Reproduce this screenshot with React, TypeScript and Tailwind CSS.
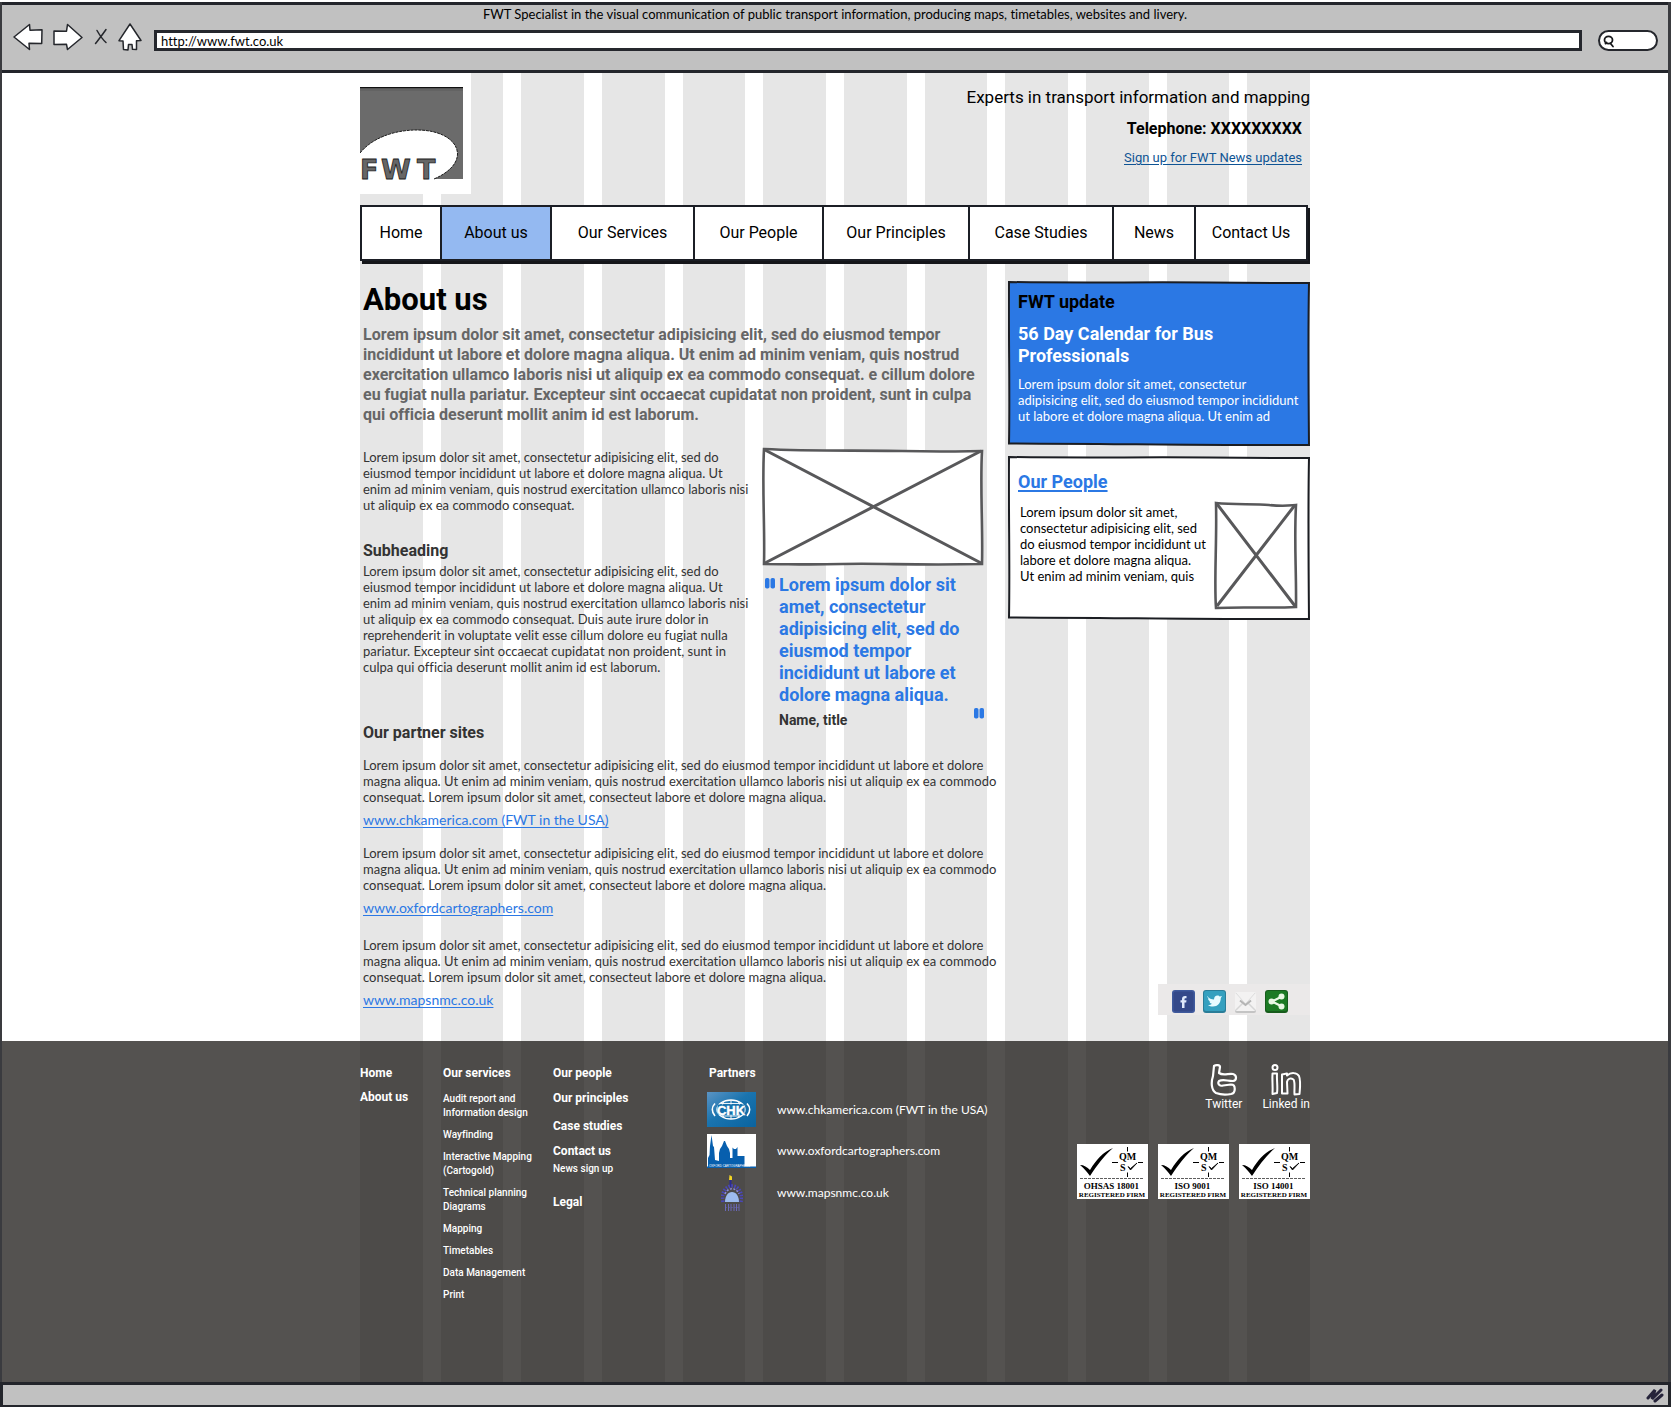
import React, { Fragment } from "react";

const introLines = [
  "Lorem ipsum dolor sit amet, consectetur adipisicing elit, sed do eiusmod tempor",
  "incididunt ut labore et dolore magna aliqua. Ut enim ad minim veniam, quis nostrud",
  "exercitation ullamco laboris nisi ut aliquip ex ea commodo consequat. e cillum dolore",
  "eu fugiat nulla pariatur. Excepteur sint occaecat cupidatat non proident, sunt in culpa",
  "qui officia deserunt mollit anim id est laborum.",
];

const leadLines = [
  "Lorem ipsum dolor sit amet, consectetur adipisicing elit, sed do",
  "eiusmod tempor incididunt ut labore et dolore magna aliqua. Ut",
  "enim ad minim veniam, quis nostrud exercitation ullamco laboris nisi",
  "ut aliquip ex ea commodo consequat.",
];

const subLines = [
  ...leadLines.slice(0, 3),
  "ut aliquip ex ea commodo consequat. Duis aute irure dolor in",
  "reprehenderit in voluptate velit esse cillum dolore eu fugiat nulla",
  "pariatur. Excepteur sint occaecat cupidatat non proident, sunt in",
  "culpa qui officia deserunt mollit anim id est laborum.",
];

const partnerLines = [
  "Lorem ipsum dolor sit amet, consectetur adipisicing elit, sed do eiusmod tempor incididunt ut labore et dolore",
  "magna aliqua. Ut enim ad minim veniam, quis nostrud exercitation ullamco laboris nisi ut aliquip ex ea commodo",
  "consequat. Lorem ipsum dolor sit amet, consecteut labore et dolore magna aliqua.",
];

const quoteLines = [
  "Lorem ipsum dolor sit",
  "amet, consectetur",
  "adipisicing elit, sed do",
  "eiusmod tempor",
  "incididunt ut labore et",
  "dolore magna aliqua.",
];

const updateLines = [
  "Lorem ipsum dolor sit amet, consectetur",
  "adipisicing elit, sed do eiusmod tempor incididunt",
  "ut labore et dolore magna aliqua. Ut enim ad",
];

const peopleLines = [
  "Lorem ipsum dolor sit amet,",
  "consectetur adipisicing elit, sed",
  "do eiusmod tempor incididunt ut",
  "labore et dolore magna aliqua.",
  "Ut enim ad minim veniam, quis",
];

const navItems = [
  "Home",
  "About us",
  "Our Services",
  "Our People",
  "Our Principles",
  "Case Studies",
  "News",
  "Contact Us",
];

function Lines({ of }: { of: string[] }) {
  return (
    <>
      {of.map((line, i) => (
        <Fragment key={i}>
          {i > 0 && <br />}
          {line}
        </Fragment>
      ))}
    </>
  );
}

function Toolbar() {
  const iconProps = {
    fill: "#fff",
    stroke: "#25272c",
    strokeWidth: 1.5,
    strokeLinejoin: "round" as const,
    strokeLinecap: "round" as const,
  };
  return (
    <header className="flex h-[71px] flex-col border-t-[3px] border-b-[3px] border-[#23252b] bg-[#c1c1c1]">
      <p className="text-center font-['Lato',sans-serif] text-[13px] leading-[18px] whitespace-nowrap text-black">
        FWT Specialist in the visual communication of public transport information, producing maps, timetables,
        websites and livery.
      </p>
      <div className="flex items-start pr-2.5 pl-[11px]">
        <button type="button" aria-label="Back" className="mr-2.5">
          <svg width="30" height="28" viewBox="0 0 30 28" {...iconProps}>
            <path d="M1 14 16.500 1.500 17 7.300 29 6.700 28.700 20.500 16 20.300 16.500 26.500Z" />
          </svg>
        </button>
        <button type="button" aria-label="Forward" className="mr-[11px]">
          <svg width="30" height="28" viewBox="0 0 30 28" {...iconProps}>
            <path d="M1 8 13.500 8.200 14.500 1.500 29 14.500 14.500 26.500 13.500 21.300 1 21.500Z" />
          </svg>
        </button>
        <button type="button" aria-label="Stop" className="mr-2.5">
          <svg width="14" height="28" viewBox="0 0 14 28" {...iconProps} fill="none">
            <path d="M3 7.500C5 11 8 16 12 19.500M12 6.500C9 11 5 16 1.500 20.500" />
          </svg>
        </button>
        <button type="button" aria-label="Home page" className="mr-3">
          <svg width="24" height="28" viewBox="0 0 24 28" {...iconProps}>
            <path d="M12 1 23 17.500 18.500 17.800 18.500 26.500 14.500 26.300 14 21.500 10.500 21.500 10 27 5.500 26.500 5 18 1 17.700Z" />
          </svg>
        </button>
        <input
          type="text"
          aria-label="Address"
          defaultValue="http://www.fwt.co.uk"
          className="mt-[7px] h-[21px] min-w-0 flex-1 border-[3px] border-[#25272d] bg-white px-1 font-['Lato',sans-serif] text-[13px] text-black outline-none"
        />
        <label className="mt-[7px] ml-4 flex h-[21px] w-[60px] items-center rounded-full border-2 border-[#25272d] bg-white pl-0.5">
          <svg width="14" height="14" viewBox="0 0 14 14" fill="none" stroke="#17181b" strokeWidth="1.8">
            <ellipse cx="6.500" cy="6" rx="4" ry="3.700" />
            <path d="M3.500 9.500 4.500 8.500M8.500 9.500 11 12.500" strokeLinecap="round" />
          </svg>
          <input type="text" aria-label="Search" className="w-8 min-w-0 bg-transparent text-xs outline-none" />
        </label>
      </div>
    </header>
  );
}

function Stripes() {
  return (
    <div aria-hidden="true" className="absolute inset-0 flex justify-center">
      <div className="grid w-full max-w-[950px] grid-cols-12 gap-x-[18px]">
        {Array.from({ length: 12 }, (_, i) => (
          <div key={i} className="bg-[#e6e6e6]" />
        ))}
      </div>
    </div>
  );
}

function FwtLogo() {
  return (
    <svg width="103" height="100" viewBox="0 0 103 100" role="img" aria-label="FWT">
      <rect width="103" height="92" fill="#6b6b6b" />
      <path d="M0 .5H103" stroke="#111" strokeWidth="1.500" />
      <path d="M0 3H103" stroke="#5c5c5c" />
      <path d="M0 66C12 51 34 43 57 43C82 43 97.500 54 97.500 67C97.500 77 88 86 74 92H0Z" fill="#fff" />
      <path
        d="M0 66C12 51 34 43 57 43C82 43 97.500 54 97.500 67C97.500 77 88 86 74 92"
        fill="none"
        stroke="#1a1a1a"
        strokeDasharray="3 .8"
      />
      <g
        fill="#666"
        stroke="#1a1a1a"
        strokeWidth=".8"
        fontSize="27"
        fontFamily="'DejaVu Sans', sans-serif"
        fontWeight="700"
      >
        <text x="0" y="91.500">F</text>
        <text x="21" y="91.500">W</text>
        <text x="57" y="91.500">T</text>
      </g>
    </svg>
  );
}

function SketchFrame({ fill }: { fill: string }) {
  return (
    <svg
      aria-hidden="true"
      className="absolute inset-0 h-full w-full"
      viewBox="0 0 300 164"
      preserveAspectRatio="none"
    >
      <path
        d="M1 1C60 2 140 1 200 1.500S270 2 299 2C298 50 298.500 110 299 163C220 163.500 150 162.500 90 162S40 162 1 161.500C2 110 .5 60 1 1Z"
        fill={fill}
        stroke="#1b1d22"
        strokeWidth="2"
        vectorEffect="non-scaling-stroke"
      />
    </svg>
  );
}

function WidePicture() {
  return (
    <svg className="w-full" viewBox="0 0 222 119" role="img" aria-label="Picture">
      <path
        d="M2 2C50 4.500 100 3 140 4S190 4.500 220 4C218 40 221 80 220 117C150 118.500 120 116 80 117S30 117 2 117C3 80 0 40 2 2Z"
        fill="#fff"
        stroke="#58585a"
        strokeWidth="2.600"
      />
      <path d="M3 3 219 116M3 116 219 4" stroke="#58585a" strokeWidth="3" />
    </svg>
  );
}

function TallPicture() {
  return (
    <svg width="84" height="109" viewBox="0 0 84 109" role="img" aria-label="Portrait">
      <path
        d="M2 2C20 4 40 2.500 55 4S75 4.500 82 4C80 40 82.500 70 82 106C55 107.500 30 105.500 2 107C0 80 3 40 2 2Z"
        fill="#fff"
        stroke="#58585a"
        strokeWidth="2.600"
      />
      <path d="M3 3 81 105M3 105 81 4" stroke="#58585a" strokeWidth="3" />
    </svg>
  );
}

function QuoteMark() {
  return (
    <svg width="10" height="11" viewBox="0 0 10 11" aria-hidden="true" fill="#2b78e4">
      <rect x="0" y="0" width="4.500" height="10.500" rx="1.800" />
      <rect x="5.500" y="0" width="4.500" height="10.500" rx="1.800" />
    </svg>
  );
}

function ShareStrip() {
  return (
    <div className="mb-[26px] flex h-[31px] w-[152px] items-end gap-2 self-end bg-[#ebe9e9] pb-0.5 pl-3.5">
      <a href="#facebook" aria-label="Facebook">
        <svg width="23" height="23" viewBox="0 0 23 23">
          <rect width="23" height="23" rx="3" fill="#3f5a9d" />
          <rect x="1.500" y="1.500" width="20" height="20" rx="2" fill="#34498a" />
          <path d="M10 18V12.500H8.500V10.300H10V9C10 7 11 6 13 6H14.500V8.300H13.300C12.700 8.300 12.500 8.600 12.500 9.200V10.300H14.500L14.200 12.500H12.500V18Z" fill="#dfe9fb" />
        </svg>
      </a>
      <a href="#twitter" aria-label="Twitter">
        <svg width="23" height="23" viewBox="0 0 23 23">
          <rect width="23" height="23" rx="3" fill="#2a7d98" />
          <rect x="1" y="1" width="21" height="20" rx="2" fill="#35a0bf" />
          <path d="M4 6C6 8.500 8.500 9.500 11 9.500C11 7 12.500 5.500 14.500 5.500C15.500 5.500 16.300 6 16.800 6.600L19 6L17.800 8C17.800 13 14.500 16.500 10 16.500C8 16.500 6.300 16 5 15C7 15 8 14.600 9 13.800C7.500 13.500 6.700 12.700 6.300 11.500H7.500C6 11 5 9.700 5 8.300L6 8.500C4.700 7.600 4 7 4 6Z" fill="#e8fbff" />
        </svg>
      </a>
      <a href="#mail" aria-label="E-mail">
        <svg width="23" height="23" viewBox="0 0 23 23">
          <rect x="1" y="3" width="21" height="20" rx="2" fill="#c4c4c4" />
          <rect x="1" y="2" width="21" height="19" rx="2" fill="#f3f2f2" />
          <path d="M2 20 8.500 13.500M21 20 14.500 13.500" stroke="#d6d6d6" strokeWidth="1.500" />
          <path d="M2 3 11.500 14 21 3" fill="none" stroke="#dcdcdc" />
          <path d="M6 10.500 11.500 15 17 10.500" fill="none" stroke="#b4b4b4" strokeWidth="2" />
        </svg>
      </a>
      <a href="#share" aria-label="Share">
        <svg width="23" height="23" viewBox="0 0 23 23">
          <rect width="23" height="23" rx="3" fill="#175c1c" />
          <rect x="1" y="1" width="21" height="20" rx="2" fill="#1c7a24" />
          <path d="M17 6.500 7 11.500 17 16.500" fill="none" stroke="#e9f8e4" strokeWidth="2.400" />
          <g fill="#e9f8e4">
            <circle cx="16.500" cy="6.500" r="3" />
            <circle cx="6.500" cy="11.500" r="3" />
            <circle cx="16.500" cy="16.500" r="3" />
          </g>
        </svg>
      </a>
    </div>
  );
}

function PartnerBlock({ link }: { link: string }) {
  return (
    <div className="flex flex-col items-start font-['Lato',sans-serif]">
      <p className="text-[13px] leading-4 whitespace-nowrap text-[#333]">
        <Lines of={partnerLines} />
      </p>
      <a href="#partner" className="mt-1.5 text-[14px] leading-[18px] text-[#2b78e4] underline underline-offset-2">
        {link}
      </a>
    </div>
  );
}

function ChkLogo() {
  return (
    <svg width="49" height="35" viewBox="0 0 49 35" role="img" aria-label="CHK">
      <defs>
        <linearGradient id="chk" x1="0" y1="0" x2="1" y2="1">
          <stop offset="0" stopColor="#5b94c4" />
          <stop offset=".45" stopColor="#1a74af" />
          <stop offset="1" stopColor="#0a639f" />
        </linearGradient>
      </defs>
      <rect width="49" height="35" fill="url(#chk)" />
      <g fill="none" stroke="#fff">
        <ellipse cx="24" cy="17.500" rx="14" ry="9.500" strokeWidth="1.300" />
        <path d="M24 8V27M17 9C14 15 14 20 17 26M31 9C34 15 34 20 31 26M14 11.500H34M14 24H34" strokeWidth=".9" />
        <path d="M8 11.500C4.500 15 4.500 20 8 24M40 11.500C43.500 15 43.500 20 40 24" strokeWidth="1.700" />
      </g>
      <rect x="10.500" y="12.500" width="27" height="10" fill="#1670ab" />
      <text x="24" y="22.500" textAnchor="middle" fill="#fff" stroke="#fff" strokeWidth=".4" fontSize="13" fontWeight="700" fontFamily="'Liberation Sans', sans-serif">
        CHK
      </text>
    </svg>
  );
}

function OxfordLogo() {
  return (
    <svg width="49" height="34" viewBox="0 0 49 34" role="img" aria-label="Oxford skyline">
      <rect width="49" height="34" fill="#fff" />
      <path
        d="M1 33V24L2.500 21 3 12 4.500 1 6 12 7 13 8 26 12 27V19L13 15 15 12 17 7 18 7 20 12 22 15 23 19V24H25.500V13.500L27 15H29L30.500 13V22H37.500V33Z"
        fill="#075fae"
      />
      <path d="M0 33.300H49" stroke="#075fae" strokeWidth="1.500" />
      <text x="2" y="32.500" fill="#fff" fontSize="3" fontFamily="'Liberation Sans', sans-serif">
        OXFORD CARTOGRAPHERS
      </text>
    </svg>
  );
}

function MapsLogo() {
  return (
    <svg width="22" height="36" viewBox="0 0 22 36" role="img" aria-label="Maps NMC">
      <path d="M8.500 0 11 1.500V5H8Z" fill="#f3d524" />
      <path d="M9.500 5V12" stroke="#2b2a93" strokeWidth="2" />
      <path d="M2 27C0 17 5 11 11 11S22 17 20 27" fill="none" stroke="#4a47b8" strokeWidth="3.500" strokeDasharray="1.500 1.400" />
      <path d="M4 19C7 12 15 12 18 19" fill="none" stroke="#8f8cdb" strokeWidth="1.500" strokeDasharray="2 1.500" />
      <path d="M4 27C4 21 7 17 11 17S18 21 18 27Z" fill="#9dbbee" />
      <path d="M4.500 29V36M7.500 29V36M10 29V36M13 29V36M15.500 29V36M18 29V36" stroke="#6b68b8" />
      <path d="M4.500 32.500H18" stroke="#6b68b8" strokeDasharray="1 2" />
    </svg>
  );
}

function Badge({ name }: { name: string }) {
  return (
    <svg width="71" height="55" viewBox="0 0 71 55" role="img" aria-label={name}>
      <rect width="71" height="55" fill="#fff" />
      <path d="M3 21C7 21 10 23 13 26C19 16 26 8 36 4C28 11 20 21 13 32C10 28 7 24 3 21Z" fill="#000" />
      <g fontFamily="'Liberation Serif', serif" fontWeight="700" fill="#000">
        <text x="42" y="16" fontSize="10">QM</text>
        <text x="43" y="27" fontSize="10">S</text>
        <text x="34.500" y="45" fontSize="9" textAnchor="middle">{name}</text>
        <text x="35" y="52.500" fontSize="7" textAnchor="middle">REGISTERED FIRM</text>
      </g>
      <path d="M51 22.500 53.500 26 60 19 53.500 24.500Z" fill="#000" stroke="#000" strokeWidth=".8" />
      <path d="M50.500 3V7.500M50.500 28.500V33M35 18.500H41M61 18.500H66" stroke="#000" />
      <path d="M3 34.500H67" stroke="#333" strokeWidth=".8" strokeDasharray="3 1" />
    </svg>
  );
}

function SocialLinks() {
  return (
    <div className="-mt-px flex justify-end gap-5 text-[12px] leading-4">
      <a href="#twitter" className="flex flex-col items-center">
        <svg width="28" height="32" viewBox="0 0 28 32" fill="none" stroke="#fff" strokeWidth="2.200" strokeLinejoin="round" aria-hidden="true">
          <path d="M4 2C6 .5 10 1 10 3L9 9C13 12 19 9 23 10C27 11 27 16.500 23 17C17 17 13 15 9 17C7 20 10 22.500 13 21.500L21 20.500C26 20.500 26 29 21 30C15 31 10 30.500 6 29C1 26 1 18 3 12Z" />
        </svg>
        Twitter
      </a>
      <a href="#linkedin" className="flex flex-col items-center">
        <svg width="32" height="32" viewBox="0 0 32 32" fill="none" stroke="#fff" strokeWidth="2" strokeLinejoin="round" aria-hidden="true">
          <circle cx="5" cy="3.500" r="2.500" />
          <path d="M2.500 9.500 7 9.500C6.500 16 8 23 7 29L2.500 30C3 22 2 16 2.500 9.500Z" />
          <path d="M12 10.500 17 9.500V11.500C21 8 27 8.500 29 12C31 17 30 24 29.500 30L24.500 30.500C24 25 25.500 19 23.500 15.500C20 13.500 17.500 15 17 18L17.500 29.500L12 29.500Z" />
        </svg>
        Linked in
      </a>
    </div>
  );
}

function Footer() {
  return (
    <footer className="relative flex-1 bg-[#0b0905]/70 pt-6 pb-20 text-white">
      <div className="mx-auto grid max-w-[950px] grid-cols-[83fr_110fr_154fr_603fr]">
        <ul className="flex flex-col gap-2 text-[12px] leading-4 font-bold whitespace-nowrap">
          <li><a href="#home">Home</a></li>
          <li><a href="#about">About us</a></li>
        </ul>
        <div className="whitespace-nowrap">
          <a href="#services" className="block text-[12px] leading-4 font-bold">Our services</a>
          <ul className="mt-[11px] flex flex-col gap-2 text-[10px] leading-[14px] font-medium">
            <li><a href="#audit">Audit report and<br />Information design</a></li>
            <li><a href="#way">Wayfinding</a></li>
            <li><a href="#interactive">Interactive Mapping<br />(Cartogold)</a></li>
            <li><a href="#technical">Technical planning<br />Diagrams</a></li>
            <li><a href="#mapping">Mapping</a></li>
            <li><a href="#timetables">Timetables</a></li>
            <li><a href="#data">Data Management</a></li>
            <li><a href="#print">Print</a></li>
          </ul>
        </div>
        <ul className="flex flex-col text-[12px] leading-4 font-bold whitespace-nowrap">
          <li><a href="#people">Our people</a></li>
          <li className="mt-[9px]"><a href="#principles">Our principles</a></li>
          <li className="mt-3"><a href="#cases">Case studies</a></li>
          <li className="mt-[9px]"><a href="#contact">Contact us</a></li>
          <li className="mt-0.5 text-[10px] font-medium"><a href="#news">News sign up</a></li>
          <li className="mt-[17px]"><a href="#legal">Legal</a></li>
        </ul>
        <div className="flex justify-between">
          <div>
            <h2 className="pl-0.5 text-[12px] leading-4 font-bold">Partners</h2>
            <ul className="mt-[11px] grid gap-[7px] font-['Lato',sans-serif] text-[12px] whitespace-nowrap">
              <li><a href="#chk" className="flex items-center gap-[21px]"><ChkLogo />www.chkamerica.com (FWT in the USA)</a></li>
              <li><a href="#oxford" className="flex items-center gap-[21px]"><OxfordLogo />www.oxfordcartographers.com</a></li>
              <li>
                <a href="#maps" className="flex items-center gap-[21px]">
                  <span className="flex w-[49px] justify-center"><MapsLogo /></span>
                  www.mapsnmc.co.uk
                </a>
              </li>
            </ul>
          </div>
          <div className="flex flex-col gap-8">
            <SocialLinks />
            <div className="flex gap-2.5">
              <Badge name="OHSAS 18001" />
              <Badge name="ISO 9001" />
              <Badge name="ISO 14001" />
            </div>
          </div>
        </div>
      </div>
    </footer>
  );
}

export default function App() {
  return (
    <div className="flex min-h-screen flex-col bg-white pt-0.5 font-['Roboto','Liberation_Sans',sans-serif] [font-variant-ligatures:none]">
      <div className="flex flex-1 flex-col border-r-[3px] border-l-2 border-[#3a3b3f]">
        <Toolbar />
        <div className="relative flex flex-1 flex-col">
          <Stripes />
          <div className="relative mx-auto flex w-full max-w-[950px] flex-col">
            <div className="flex h-[132px] justify-between">
              <div className="-ml-2 h-[121px] w-[119px] bg-white pt-3.5 pl-2">
                <FwtLogo />
              </div>
              <div className="flex flex-col items-end pt-3">
                <p className="text-[17px] leading-6 text-black">Experts in transport information and mapping</p>
                <p className="mt-2 mr-2 text-[16px] leading-6 font-bold text-black">Telephone: XXXXXXXXX</p>
                <a href="#news" className="mt-[7px] mr-2 text-[13px] leading-5 text-[#0f5494] underline underline-offset-2">
                  Sign up for FWT News updates
                </a>
              </div>
            </div>

            <nav className="mr-0.5 grid h-14 grid-cols-[80fr_110fr_143fr_129fr_146fr_144fr_82fr_110fr] border-2 border-[#1b1e25] bg-white shadow-[2px_3px_0_#15161a]">
              {navItems.map((item) => (
                <a
                  key={item}
                  href="#nav"
                  className={
                    item === "About us"
                      ? "flex items-center justify-center border-r-2 border-[#1b1e25] bg-[#94b9f1] text-[16px] whitespace-nowrap text-black"
                      : "flex items-center justify-center border-r-2 border-[#1b1e25] text-[16px] whitespace-nowrap text-black last:border-r-0"
                  }
                >
                  {item}
                </a>
              ))}
            </nav>

            <div className="grid grid-cols-[minmax(0,624fr)_minmax(0,302fr)] gap-6">
              <main className="pt-[21px] pb-[30px] pl-[3px]">
                <h1 className="text-[31px] leading-9 font-bold text-black">About us</h1>
                <p className="mt-[7px] text-[16px] leading-5 font-bold whitespace-nowrap text-[#666]">
                  <Lines of={introLines} />
                </p>
                <div className="mt-[22px] grid grid-cols-[minmax(0,399fr)_minmax(0,222fr)]">
                  <div className="pt-0.5 text-[#333]">
                    <p className="font-['Lato',sans-serif] text-[13px] leading-4 whitespace-nowrap">
                      <Lines of={leadLines} />
                    </p>
                    <h2 className="mt-7 text-[16px] leading-5 font-bold">Subheading</h2>
                    <p className="mt-0.5 font-['Lato',sans-serif] text-[13px] leading-4 whitespace-nowrap">
                      <Lines of={subLines} />
                    </p>
                    <h2 className="mt-12 text-[16px] leading-5 font-bold">Our partner sites</h2>
                  </div>
                  <figure>
                    <WidePicture />
                    <div className="mt-2 flex justify-between pl-[3px]">
                      <span className="mt-1"><QuoteMark /></span>
                      <blockquote className="flex-1 pl-1 text-[18px] leading-[22px] font-bold whitespace-nowrap text-[#2b78e4]">
                        <Lines of={quoteLines} />
                      </blockquote>
                    </div>
                    <div className="flex justify-between pl-[17px]">
                      <figcaption className="mt-[5px] text-[14px] leading-[18px] font-bold text-[#333]">Name, title</figcaption>
                      <span className="mt-0.5"><QuoteMark /></span>
                    </div>
                  </figure>
                </div>
                <div className="mt-3.5 flex flex-col gap-4">
                  <PartnerBlock link="www.chkamerica.com (FWT in the USA)" />
                  <PartnerBlock link="www.oxfordcartographers.com" />
                  <div className="pt-1 pb-0.5">
                    <PartnerBlock link="www.mapsnmc.co.uk" />
                  </div>
                </div>
              </main>

              <aside className="flex flex-col pt-5">
                <section className="relative mb-2.5 h-[165px]">
                  <SketchFrame fill="#2b78e4" />
                  <div className="relative pt-[9px] pl-2.5 whitespace-nowrap text-white">
                    <h2 className="text-[18px] leading-6 font-bold text-black">FWT update</h2>
                    <h3 className="mt-[9px] text-[18px] leading-[22px] font-bold">
                      56 Day Calendar for Bus
                      <br />
                      Professionals
                    </h3>
                    <p className="mt-[9px] font-['Lato',sans-serif] text-[13px] leading-4">
                      <Lines of={updateLines} />
                    </p>
                  </div>
                </section>
                <section className="relative h-[164px]">
                  <SketchFrame fill="#fff" />
                  <div className="relative pt-3.5 pl-2.5">
                    <h2 className="text-[18px] leading-6 font-bold text-[#2b78e4]">
                      <a href="#people" className="underline decoration-2 underline-offset-2">Our People</a>
                    </h2>
                    <div className="flex justify-between pr-3 pl-0.5">
                      <p className="mt-2.5 font-['Lato',sans-serif] text-[13px] leading-4 whitespace-nowrap text-black">
                        <Lines of={peopleLines} />
                      </p>
                      <span className="mt-[7px]"><TallPicture /></span>
                    </div>
                  </div>
                </section>
                <div className="flex-1" />
                <ShareStrip />
              </aside>
            </div>
          </div>
          <Footer />
        </div>
      </div>
      <div className="flex h-[26px] items-center justify-end border-[3px] border-[#23252b] bg-[#c1c1c1] pr-1">
        <svg width="18" height="16" viewBox="0 0 18 16" fill="none" stroke="#25233a" strokeWidth="3" strokeLinecap="round" aria-hidden="true">
          <path d="M2 11 9 3 6 12 15 3M9 14 16 8" />
        </svg>
      </div>
    </div>
  );
}
